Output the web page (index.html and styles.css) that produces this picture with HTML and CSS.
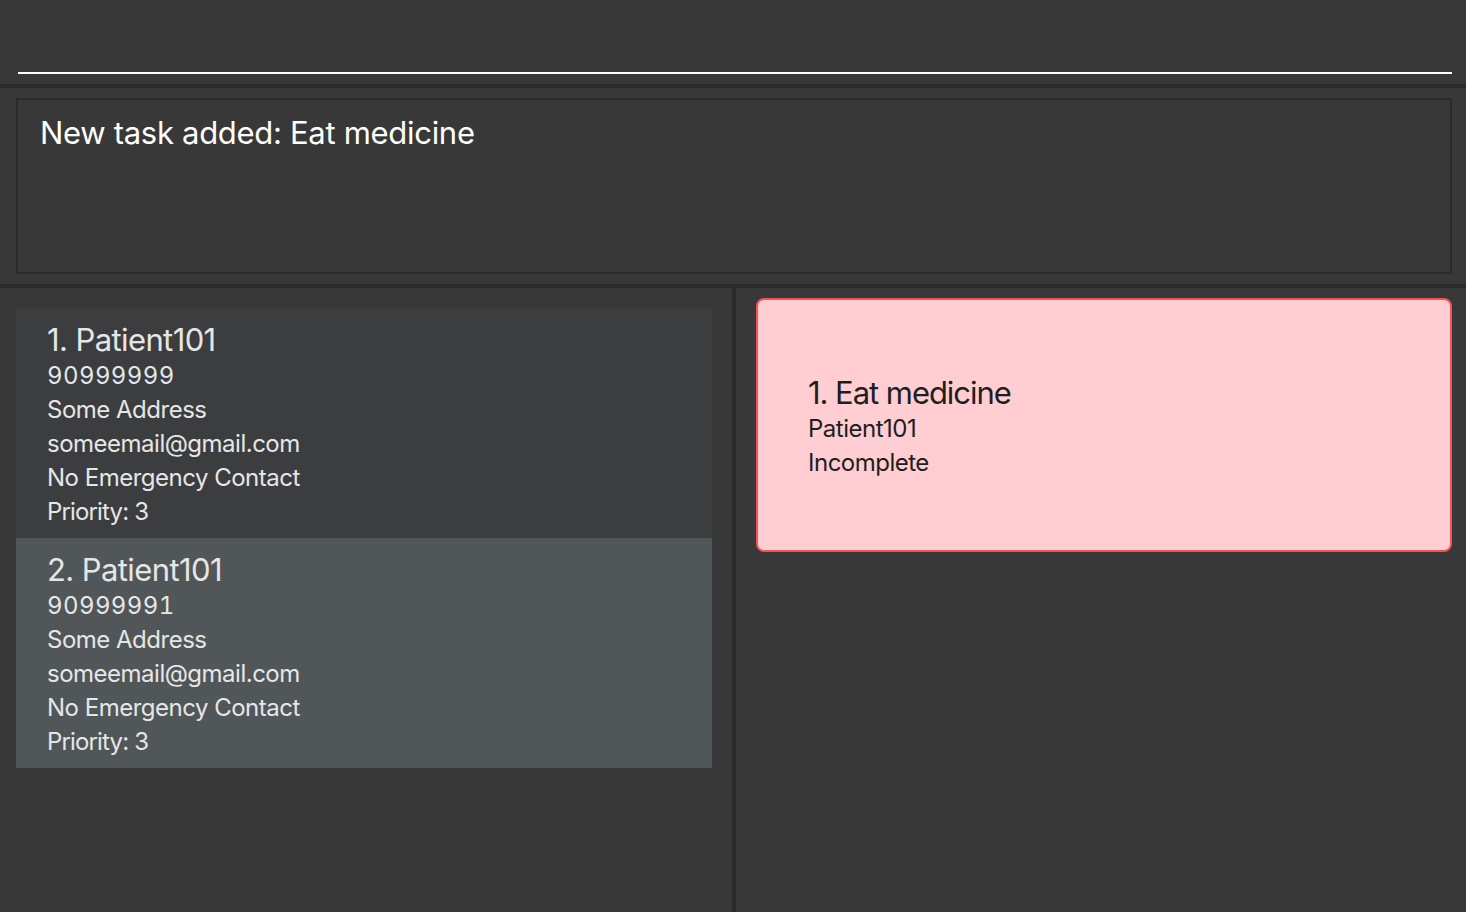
FILE: index.html
```html
<!DOCTYPE html>
<html>
<head>
<meta charset="utf-8">
<link rel="stylesheet" href="styles.css">
</head>
<body>
<div class="app">
  <div class="command">
    <div class="command-line"></div>
  </div>
  <div class="hsep"></div>
  <div class="result-wrap">
    <div class="result">New task added: Eat medicine</div>
  </div>
  <div class="hsep"></div>
  <div class="main">
    <div class="left">
      <div class="pcard">
        <div class="pname">1. Patient101</div>
        <div class="pline num">90999999</div>
        <div class="pline">Some Address</div>
        <div class="pline">someemail@gmail.com</div>
        <div class="pline">No Emergency Contact</div>
        <div class="pline tight">Priority: 3</div>
      </div>
      <div class="pcard selected">
        <div class="pname">2. Patient101</div>
        <div class="pline num">90999991</div>
        <div class="pline">Some Address</div>
        <div class="pline">someemail@gmail.com</div>
        <div class="pline">No Emergency Contact</div>
        <div class="pline tight">Priority: 3</div>
      </div>
    </div>
    <div class="vsep"></div>
    <div class="right">
      <div class="tcard">
        <div class="tname">1. Eat medicine</div>
        <div class="tline">Patient101</div>
        <div class="tline">Incomplete</div>
      </div>
    </div>
  </div>
</div>
</body>
</html>
```

FILE: styles.css
```css
html, body {
  margin: 0;
  padding: 0;
  background: #383838;
  font-family: "Inter", "Noto Sans", sans-serif;
}
.app {
  width: 1466px;
  height: 912px;
  display: flex;
  flex-direction: column;
  overflow: hidden;
}
.command {
  height: 84px;
  padding: 0 14px 0 18px;
  display: flex;
  flex-direction: column;
  justify-content: flex-end;
  box-sizing: border-box;
}
.command-line {
  height: 2px;
  background: #ffffff;
  margin-bottom: 10px;
}
.hsep {
  height: 4px;
  background: #2b2b2b;
}
.result-wrap {
  height: 196px;
  padding: 10px 14px 10px 16px;
  box-sizing: border-box;
  display: flex;
}
.result {
  flex: 1;
  border: 2px solid #2a2a2a;
  color: #ffffff;
  font-size: 31px;
  letter-spacing: -0.3px;
  padding: 13px 0 0 22px;
  line-height: 40px;
}
.main {
  flex: 1;
  display: flex;
}
.left {
  width: 732px;
  padding: 20px 20px 0 16px;
  box-sizing: border-box;
  display: flex;
  flex-direction: column;
}
.vsep {
  width: 4px;
  background: #2b2b2b;
}
.right {
  flex: 1;
  padding: 10px 14px 0 20px;
}
.pcard {
  height: 230px;
  background: #3c3d3f;
  padding: 13px 0 0 31px;
  box-sizing: border-box;
  color: #e6e6e6;
}
.pcard.selected {
  background: #515658;
}
.pname {
  font-size: 31px;
  line-height: 38px;
  letter-spacing: -0.6px;
}
.pline {
  font-size: 24px;
  line-height: 34px;
  letter-spacing: -0.5px;
}
.pline.num {
  font-variant-numeric: tabular-nums;
  letter-spacing: 0.4px;
}
.pline.tight {
  letter-spacing: -0.85px;
}
.tcard {
  height: 254px;
  box-sizing: border-box;
  background: #ffcdd2;
  border: 2px solid #f05555;
  border-radius: 8px;
  padding: 74px 0 0 50px;
  color: #1e1e1e;
}
.tname {
  font-size: 31px;
  line-height: 38px;
  letter-spacing: -1.05px;
}
.tline {
  font-size: 24px;
  line-height: 34px;
  letter-spacing: -0.5px;
}
```
